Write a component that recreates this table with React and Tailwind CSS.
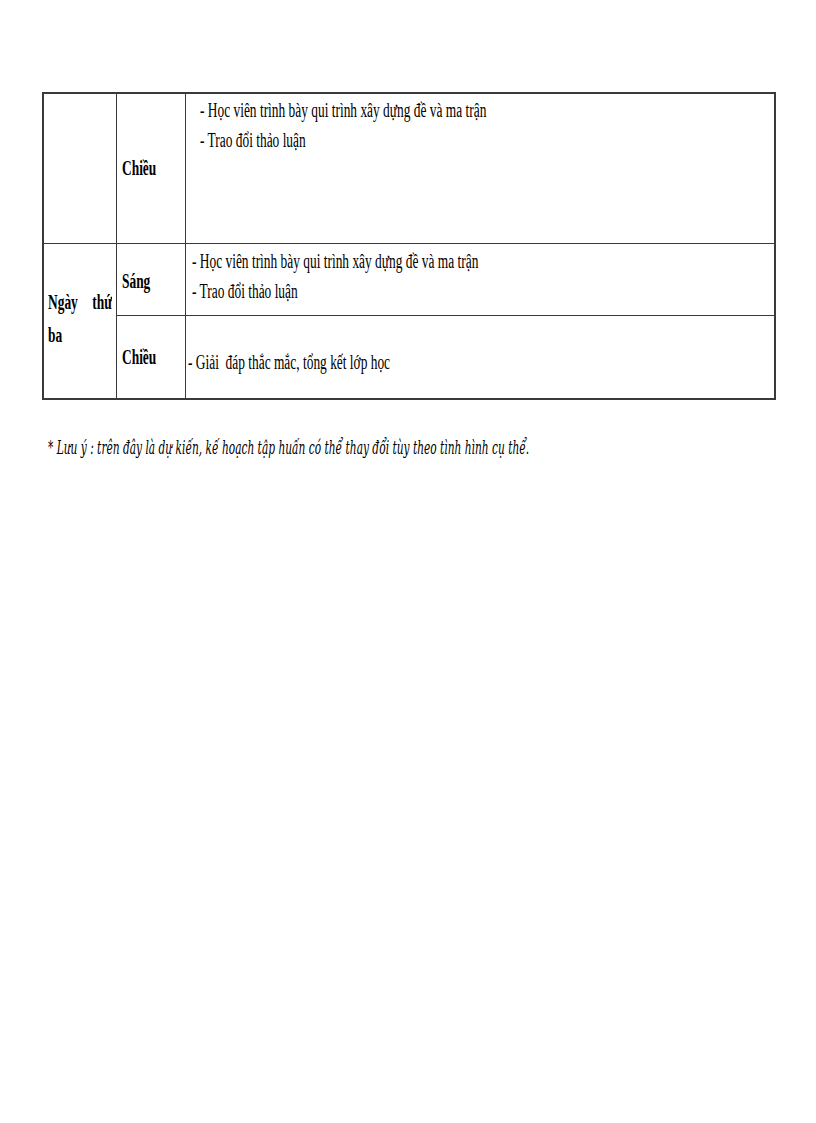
import React from "react";

const serif = { fontFamily: '"Liberation Serif", "Times New Roman", serif' };

function S({ children, className = "" }) {
  return (
    <span className={`inline-block whitespace-nowrap scale-x-[0.67] origin-left ${className}`}>
      {children}
    </span>
  );
}

function Clip({ children, className = "" }) {
  return <div className={`overflow-hidden whitespace-nowrap ${className}`}>{children}</div>;
}

export default function App() {
  const border = "border border-[#3a3a3a]";
  return (
    <div className="w-[816px] h-[1123px] bg-white text-black overflow-hidden" style={serif}>
      <div className="pt-[92px] pl-[42px]">
        <table className="border-collapse table-fixed w-[734px] border-2 border-[#3a3a3a]">
          <colgroup>
            <col className="w-[73px]" />
            <col className="w-[69px]" />
            <col />
          </colgroup>
          <tbody className="text-[20px] leading-[30px]">
            <tr className="h-[150px]">
              <td className={border}></td>
              <td className={`${border} align-middle pl-[5px] font-bold`}>
                <Clip><S>Chiều</S></Clip>
              </td>
              <td className={`${border} align-top pl-[14px] pt-[1px]`}>
                <Clip><S>- Học viên trình bày qui trình xây dựng đề và ma trận</S></Clip>
                <Clip><S>- Trao đổi thảo luận</S></Clip>
              </td>
            </tr>
            <tr className="h-[72px]">
              <td rowSpan={2} className={`${border} align-middle px-[4px] font-bold leading-[33px]`}>
                <Clip>
                  <div className="flex justify-between w-[96px] scale-x-[0.67] origin-left">
                    <span>Ngày</span>
                    <span>thứ</span>
                  </div>
                </Clip>
                <Clip><S>ba</S></Clip>
                <div className="h-[4px]"></div>
              </td>
              <td className={`${border} align-middle pl-[5px] font-bold`}>
                <Clip className="mt-[4px]"><S>Sáng</S></Clip>
              </td>
              <td className={`${border} align-middle pl-[6px]`}>
                <div className="-mt-[6px]">
                  <Clip><S>- Học viên trình bày qui trình xây dựng đề và ma trận</S></Clip>
                  <Clip><S>- Trao đổi thảo luận</S></Clip>
                </div>
              </td>
            </tr>
            <tr className="h-[84px]">
              <td className={`${border} align-middle pl-[5px] font-bold`}>
                <Clip><S>Chiều</S></Clip>
              </td>
              <td className={`${border} align-middle pl-[2px]`}>
                <Clip className="mt-[10px]"><S>- Giải &nbsp;đáp thắc mắc, tổng kết lớp học</S></Clip>
              </td>
            </tr>
          </tbody>
        </table>
        <div
          className="mt-[36px] pl-[6px] italic text-[18px] leading-[24px] w-[700px] overflow-hidden whitespace-nowrap"
          style={{ fontFamily: '"DejaVu Serif", "Liberation Serif", serif' }}
        >
          <span className="inline-block whitespace-nowrap scale-x-[0.59] origin-left">
            * Lưu ý : trên đây là dự kiến, kế hoạch tập huấn có thể thay đổi tùy theo tình hình cụ thể.
          </span>
        </div>
      </div>
    </div>
  );
}
